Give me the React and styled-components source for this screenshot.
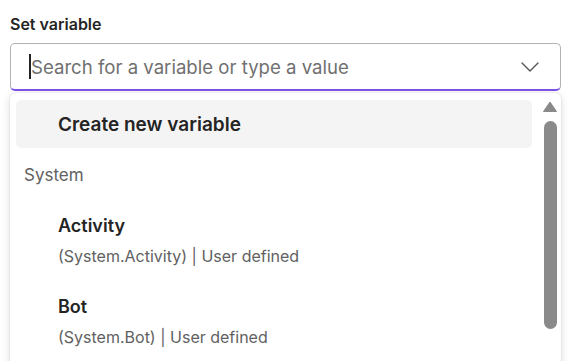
import React from 'react';
import styled, { createGlobalStyle } from 'styled-components';

const Global = createGlobalStyle`
  html, body {
    margin: 0;
    padding: 0;
    background: #fff;
    overflow: hidden;
  }
  body {
    font-family: Inter, "Noto Sans", sans-serif;
    color: #242424;
  }
`;

const Page = styled.div`
  width: 573px;
  height: 361px;
  padding: 0 12px 0 10px;
  box-sizing: border-box;
  overflow: hidden;
`;

const Label = styled.div`
  font-size: 16px;
  font-weight: 600;
  line-height: 20px;
  padding-top: 14px;
  margin-bottom: 9px;
  color: #242424;
`;

const Field = styled.div`
  height: 48px;
  box-sizing: border-box;
  border: 1px solid #b3b3b3;
  border-bottom: 2px solid #7f52e8;
  border-radius: 5px;
  display: flex;
  align-items: center;
  padding: 0 21px 0 18px;
`;

const Caret = styled.span`
  width: 2px;
  height: 25px;
  background: #242424;
  flex: none;
`;

const Placeholder = styled.span`
  flex: 1;
  font-size: 18.6px;
  color: #707070;
  white-space: nowrap;
`;

const Menu = styled.div`
  margin-top: 2px;
  height: 300px;
  border-radius: 6px;
  background: #fff;
  box-shadow: 0 0 2px rgba(0,0,0,0.12), 0 2px 8px rgba(0,0,0,0.14);
  display: flex;
  padding: 7px 4px 0 6px;
  box-sizing: border-box;
`;

const List = styled.div`
  flex: 1;
  display: flex;
  flex-direction: column;
`;

const CreateItem = styled.div`
  height: 48px;
  border-radius: 5px;
  background: #f4f4f4;
  display: flex;
  align-items: center;
  padding-left: 42px;
  font-size: 19px;
  font-weight: 600;
  color: #242424;
`;

const Group = styled.div`
  box-sizing: border-box;
  font-size: 17px;
  color: #616161;
  padding: 17px 0 0 8px;
  line-height: 20px;
  height: 53px;
`;

const Option = styled.div`
  box-sizing: border-box;
  padding: 13px 0 0 42px;
  height: 81px;
  display: flex;
  flex-direction: column;
  gap: 8px;
`;

const Title = styled.div`
  font-size: 18px;
  font-weight: 600;
  line-height: 24px;
  color: #242424;
`;

const Sub = styled.div`
  font-size: 16px;
  line-height: 20px;
  color: #616161;
`;

const Scroll = styled.div`
  width: 14px;
  margin-left: 11px;
  display: flex;
  flex-direction: column;
  align-items: center;
  gap: 9px;
  padding-top: 1px;
`;

const Thumb = styled.div`
  width: 13px;
  height: 208px;
  border-radius: 7px;
  background: #8a8a8a;
`;

function Chevron() {
  return (
    <svg width="18" height="10" viewBox="0 0 18 10" fill="none">
      <path d="M1 1l8 8 8-8" stroke="#555" strokeWidth="1.4" strokeLinecap="round" strokeLinejoin="round" />
    </svg>
  );
}

function UpArrow() {
  return (
    <svg width="14" height="11" viewBox="0 0 14 11">
      <path d="M7 1 L13.5 10.5 H0.5 Z" fill="#8a8a8a" strokeLinejoin="round" stroke="#8a8a8a" strokeWidth="1" />
    </svg>
  );
}

const options = [
  { name: 'Activity', sub: '(System.Activity) | User defined' },
  { name: 'Bot', sub: '(System.Bot) | User defined' },
];

export default function App() {
  return (
    <Page>
      <Global />
      <Label>Set variable</Label>
      <Field>
        <Caret />
        <Placeholder>Search for a variable or type a value</Placeholder>
        <Chevron />
      </Field>
      <Menu>
        <List>
          <CreateItem>Create new variable</CreateItem>
          <Group>System</Group>
          {options.map(o => (
            <Option key={o.name}>
              <Title>{o.name}</Title>
              <Sub>{o.sub}</Sub>
            </Option>
          ))}
        </List>
        <Scroll>
          <UpArrow />
          <Thumb />
        </Scroll>
      </Menu>
    </Page>
  );
}
